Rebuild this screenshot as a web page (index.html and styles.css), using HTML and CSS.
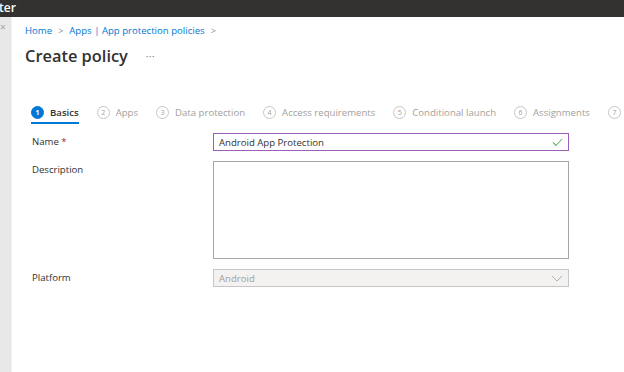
FILE: index.html
```html
<!DOCTYPE html>
<html lang="en">
<head>
    <meta charset="UTF-8">
    <title>Create policy</title>
    <link rel="stylesheet" href="styles.css">
</head>
<body>
    <div class="topbar">ter</div>
    <div class="shell">
        <div class="side"><span class="close">&times;</span></div>
        <div class="main">
            <div class="breadcrumb">
                <a href="#">Home</a><span class="chev">&gt;</span><a href="#">Apps | App protection policies</a><span class="chev">&gt;</span>
            </div>
            <div class="title-row">
                <h1>Create policy</h1>
                <span class="more">&middot;&middot;&middot;</span>
            </div>

            <ul class="steps">
                <li class="active"><span class="num">1</span>Basics</li>
                <li><span class="num">2</span>Apps</li>
                <li><span class="num">3</span>Data protection</li>
                <li><span class="num">4</span>Access requirements</li>
                <li><span class="num">5</span>Conditional launch</li>
                <li><span class="num">6</span>Assignments</li>
                <li><span class="num">7</span>Review + create</li>
            </ul>

            <div class="form">
                <div class="row">
                    <label>Name <span class="req">*</span></label>
                    <div class="field name-field">
                        <span>Android App Protection</span>
                        <svg width="11" height="9" viewBox="0 0 11 9"><path d="M1 4.5 L4 7.5 L10 1" fill="none" stroke="#6bb36b" stroke-width="1.1"/></svg>
                    </div>
                </div>
                <div class="row">
                    <label>Description</label>
                    <div class="field textarea"></div>
                </div>
                <div class="row">
                    <label>Platform</label>
                    <div class="field select">
                        <span>Android</span>
                        <svg width="12" height="7" viewBox="0 0 12 7"><path d="M1 1 L6 6 L11 1" fill="none" stroke="#b0b0b0" stroke-width="1"/></svg>
                    </div>
                </div>
            </div>
        </div>
    </div>
</body>
</html>
```

FILE: styles.css
```css
body {
    margin: 0;
    font-family: "Open Sans", "Noto Sans", sans-serif;
    font-size: 10px;
    color: #323130;
    background-color: #fff;
    overflow: hidden;
}

.topbar {
    height: 17px;
    background-color: #333231;
    color: #fff;
    font-weight: 600;
    font-size: 12px;
    line-height: 15px;
    margin-left: -1px;
}

.shell {
    display: flex;
    height: 355px;
}

.side {
    width: 11px;
    flex-shrink: 0;
    background-color: #e8e8e8;
    border-right: 1px solid #f0f0f0;
    overflow: hidden;
}

.close {
    display: block;
    color: #a0a0a0;
    font-size: 10px;
    line-height: 12px;
    margin-top: 4px;
}

.main {
    flex: 1;
    min-width: 0;
    overflow: hidden;
    padding-left: 13px;
}

.breadcrumb {
    margin-top: 7px;
    font-size: 9.6px;
    line-height: 14px;
}

.breadcrumb a {
    color: #0078d4;
    text-decoration: none;
}

.chev {
    color: #8a8886;
    margin: 0 6px;
    font-size: 9px;
}

.title-row {
    display: flex;
    align-items: center;
    margin-top: 6px;
}

h1 {
    margin: 0;
    font-size: 16.4px;
    font-weight: 600;
    line-height: 24px;
}

.more {
    color: #8a8886;
    font-size: 11px;
    margin-left: 18px;
    margin-top: -2px;
}

.steps {
    list-style-type: none;
    display: flex;
    gap: 18px;
    margin: 38px 0 0 6px;
    padding: 0;
    white-space: nowrap;
    color: #a19f9d;
    font-size: 9.6px;
}

.steps li {
    display: flex;
    align-items: center;
    gap: 6px;
    padding-bottom: 3px;
    border-bottom: 2px solid transparent;
}

.steps .num {
    width: 11px;
    height: 11px;
    border: 1px solid #c8c6c4;
    border-radius: 50%;
    font-size: 7px;
    display: flex;
    align-items: center;
    justify-content: center;
    color: #a19f9d;
}

.steps li.active {
    color: #323130;
    font-weight: 600;
    border-bottom-color: #0078d4;
}

.steps li.active .num {
    background-color: #0078d4;
    border-color: #0078d4;
    color: #fff;
    font-weight: 700;
}

.form {
    margin-top: 9px;
    margin-left: 7px;
    width: 537px;
}

.row {
    display: flex;
    margin-bottom: 10px;
}

.row label {
    width: 181px;
    font-size: 9.6px;
    line-height: 18px;
}

.req {
    color: #a4262c;
}

.field {
    flex: 1;
    box-sizing: border-box;
    height: 18px;
    border: 1px solid #8a8886;
    display: flex;
    align-items: center;
    justify-content: space-between;
    padding: 0 5px;
    font-size: 9.6px;
}

.name-field {
    border-color: #9b5fb8;
}

.textarea {
    height: 98px;
    border-color: #a8a6a4;
}

.select {
    background-color: #f3f2f1;
    border-color: #c8c6c4;
    color: #a19f9d;
}
```
